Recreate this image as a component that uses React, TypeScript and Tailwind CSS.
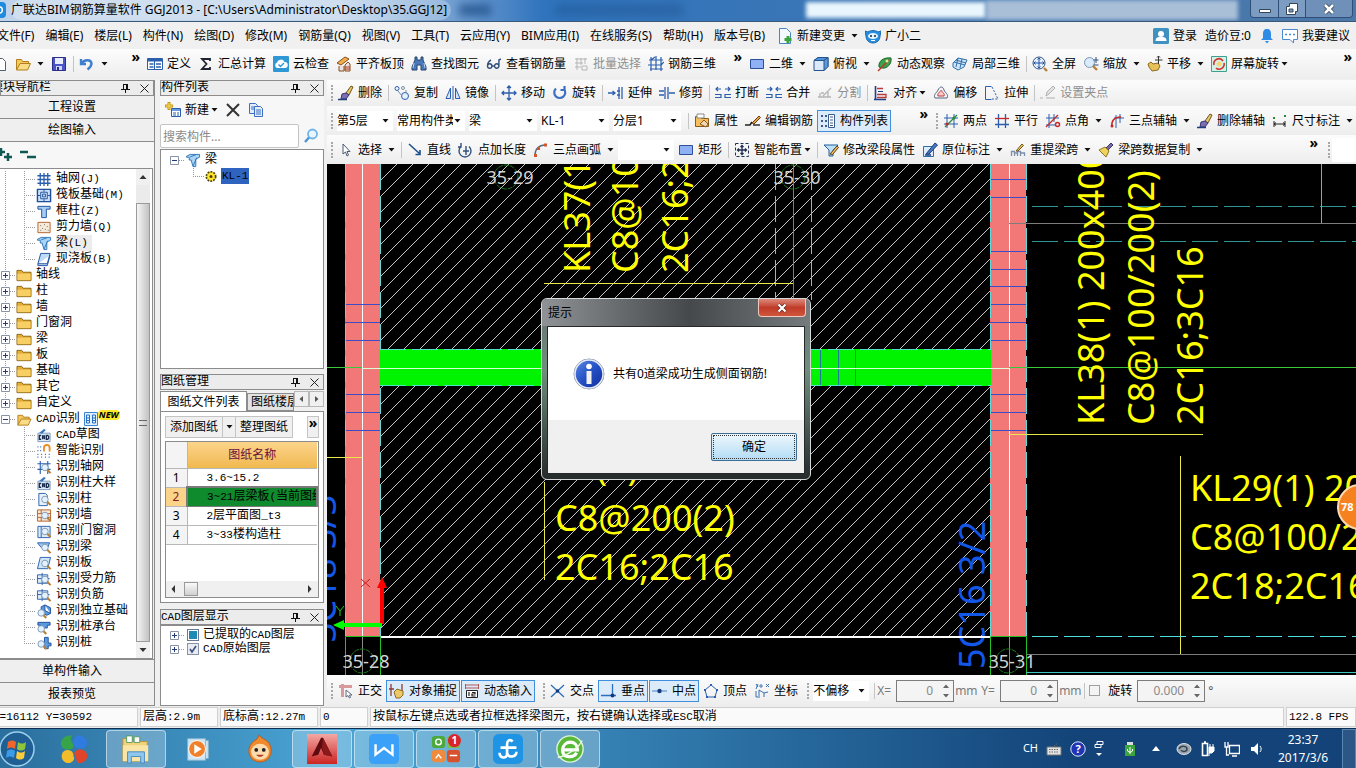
import type { ReactNode } from "react"
import clsx from "clsx"

const UI = "font-['Noto_Sans','Noto_Sans_CJK_SC',sans-serif]"
const MONO = "font-['Liberation_Mono','Noto_Sans_CJK_SC',monospace]"

// ---------------------------------------------------------------- icons

const B = "#2b5fae"
const LB = "#9cc7f0"

const magnifier = (
  <>
    <circle cx="9" cy="8" r="3.5" fill="#e4f2ff" stroke="#7d97b5" />
    <path d="M11.5 10.5l3.5 3.5" stroke="#b5803a" strokeWidth="2.2" />
  </>
)

const ICONS: Record<string, ReactNode> = {
  page: <path d="M3.5 2.5h7l3 3v9h-10z" fill="#fff" stroke="#55606e" />,
  open: (
    <>
      <path d="M1.5 14V3.5h5l1 2h6V8" fill="#f6c95c" stroke="#b17f1c" />
      <path d="M1.5 14L5 7.5h10.5L12.5 14z" fill="#fbdc86" stroke="#b17f1c" />
    </>
  ),
  save: (
    <>
      <path d="M1.5 1.5h13v13h-13z" fill="#4a55c8" stroke="#2a2f86" />
      <path d="M4 2h8v6H4z" fill="#e8ecfb" />
      <path d="M5 10h6v4H5z" fill="#cfd6f4" />
      <path d="M6 11h2v3H6z" fill="#2a2f86" />
    </>
  ),
  undo: <path d="M2 3v5h5M2.5 7.5C5 3.5 12 3 12.5 7.5c0 3-2 4.5-4 6" fill="none" stroke="#3f7fd0" strokeWidth="2.4" />,
  define: (
    <>
      <path d="M.5 2.5h15v11H.5z" fill="#fff" stroke={B} />
      <path d="M1 3h14v2.5H1z" fill={B} />
      <path d="M2.5 8h4M2.5 11h4M9 8h5M9 11h5" stroke={B} strokeWidth="1.5" />
      <path d="M7.5 5v8" stroke={B} />
    </>
  ),
  sigma: <path d="M12 5V3H4l4.5 5L4 13h8v-2" fill="none" stroke="#1d2430" strokeWidth="1.8" />,
  cloud: (
    <>
      <rect width="16" height="16" rx="1" fill="#2f98d4" />
      <path d="M4 12a3 3 0 010-5.5 4 4 0 017.5-.5A3 3 0 0112 12z" fill="#fff" />
      <path d="M5.5 8.5l2 2 3.5-3.5" fill="none" stroke="#2f98d4" strokeWidth="1.4" />
    </>
  ),
  slabTop: (
    <>
      <path d="M1 7l8-6 4 2-8 6z" fill="#f2b04a" stroke="#8a4b1c" />
      <path d="M3 10v5h5v-5M9 9v6h5V8l-2-2z" fill="#e8e2dc" stroke="#8a4b1c" />
      <path d="M9 11h5M9 13h5" stroke="#c03020" />
    </>
  ),
  binoculars: (
    <>
      <path d="M4 1h2v3h4V1h2v3l3 7v3h-5V9H6v5H1v-3l3-7z" fill="#4a78b8" stroke="#27466f" />
      <path d="M3 7l-1 5M13 7l1 5" stroke="#b5d2f2" />
    </>
  ),
  glasses: (
    <path d="M1.5 10a2.2 2.2 0 104.4 0 2.2 2.2 0 10-4.4 0C1.5 7 3 5 5 4M8.5 10a2.2 2.2 0 104.4 0 2.2 2.2 0 10-4.4 0M12.900 11V4l2-1M6 10h2.5" fill="none" stroke="#31507c" strokeWidth="1.4" />
  ),
  batch: <path d="M2 3h12M2 7h8M2 11h6M4 2v12M8 2v7M12 2v6M9 10h5v4H9z" fill="none" stroke="#b5b5b5" />,
  rebar3d: <path d="M1 4h14M0 9h14M2 13h13M3 1v14M8 0v14M13 1v14M3 4l4-3M13 9l3-3" fill="none" stroke={B} strokeWidth="1.2" />,
  rect: <path d="M1.5 3.5h13v9h-13z" fill="#8fb0f5" stroke="#2c4f9c" />,
  cube: (
    <>
      <path d="M1 4.5l4-3h10v9l-4 4H1z" fill="#dbe9fa" stroke="#27548f" />
      <path d="M1 4.5l4-3h10l-4 3z" fill="#4e94d8" stroke="#27548f" />
      <path d="M11 4.5v10l4-4v-9z" fill="#5f9ad8" stroke="#27548f" />
    </>
  ),
  orbit: (
    <>
      <path d="M2 11C1 5 7 1 14 2c1 6-4 11-9 10z" fill="#3ba14a" stroke="#176a2a" />
      <path d="M1 15L12 4" stroke="#c0392b" strokeWidth="1.5" />
      <circle cx="10" cy="5" r="1.5" fill="#d4f3a8" />
    </>
  ),
  local3d: <path d="M1 7l5-5 9 2-3 7-6 3-5-3zM6 2L4 11M10 3L8 12M2 6l11 3M4 4l10 3" fill="#cfe6fa" stroke="#2f6fa8" />,
  full: (
    <>
      <circle cx="7" cy="7" r="6" fill="#e9f3ff" stroke="#31507c" />
      <path d="M7 2v10M2 7h10M5.5 3.5L7 2l1.5 1.5M5.5 10.5L7 12l1.5-1.5M3.5 5.5L2 7l1.5 1.5M10.5 5.5L12 7l-1.5 1.5" fill="none" stroke="#1f4fa0" />
      <path d="M12 12l3 3" stroke="#b5803a" strokeWidth="2.4" />
    </>
  ),
  zoom: (
    <>
      <circle cx="6.5" cy="6.5" r="5" fill="#d9ebfc" stroke="#7d97b5" />
      <path d="M10 10l4 4" stroke="#b5803a" strokeWidth="2.4" />
      <path d="M13 1v6M10.5 4h5M10.5 9h5" stroke="#31507c" />
    </>
  ),
  hand: (
    <>
      <path d="M1 8l3-2 2 2 5-1 2 3-2 4-6 1-3-4z" fill="#e7c25a" stroke="#8c6a1c" />
      <path d="M11.5 0v8M8 4h7.5M11.5 0L10 1.5M11.5 0L13 1.5" stroke="#333" />
    </>
  ),
  screenRotate: (
    <>
      <path d="M.5.5h15v15H.5z" fill="#d6f0e8" stroke="#3fa08c" />
      <path d="M3 9a5 5 0 019-4M13 7a5 5 0 01-8 5" fill="none" stroke="#d2302c" strokeWidth="1.6" />
      <circle cx="8" cy="8" r="2.5" fill="#f6d873" />
    </>
  ),
  brush: (
    <>
      <path d="M8 8l5-7 2 1-4 8z" fill="#e8c86a" stroke="#6c551c" />
      <path d="M4 9l4-1 3 2-3 4H3z" fill="#7b6fb4" stroke="#3c3470" />
      <path d="M0 14.5h9" stroke="#1f3f7c" strokeWidth="1.5" />
    </>
  ),
  copyPts: (
    <>
      <circle cx="3" cy="3.5" r="2" fill="none" stroke={B} />
      <circle cx="9" cy="3" r="1.5" fill="none" stroke="#7a8da6" />
      <circle cx="11" cy="11" r="3.5" fill="#e6f0fb" stroke={B} />
      <path d="M4 6l4 5M12 5v3" stroke="#7a8da6" />
    </>
  ),
  mirror: <path d="M5.5 3v10.5H1zM10.5 3v10.5H15zM8 1v14" fill="#d6e6fa" stroke={B} />,
  move: <path d="M8 1v14M1 8h14M6 3l2-2 2 2M6 13l2 2 2-2M3 6L1 8l2 2M13 6l2 2-2 2" fill="none" stroke={B} strokeWidth="1.3" />,
  rotate: <path d="M4 3.5a5.5 5.5 0 108 .5M12.5 1v4H8.5" fill="none" stroke="#3a6fc4" strokeWidth="2.2" />,
  extend: <path d="M0 8h7M9 6h3M9 10h3M4.5 6L7 8l-2.5 2M14 2v12M11 2v12" fill="none" stroke={B} strokeWidth="1.3" />,
  trim: <path d="M0 6h5M0 10h5M6 2v12M9 2v12M10 8h6" fill="none" stroke={B} strokeWidth="1.3" />,
  breakIcon: <path d="M1 4h5M10 4h5M3 2L1 4l2 2M13 2l2 2-2 2M0 9.5h6v3H0M16 9.5h-6v3h6" fill="none" stroke={B} strokeWidth="1.2" />,
  merge: <path d="M1 4h5M10 4h5M4 2l2 2-2 2M12 2l-2 2 2 2M0 9.5h6v3H0M16 9.5h-6v3h6" fill="none" stroke={B} strokeWidth="1.2" />,
  split: <path d="M1 12h13M4 8h3M3 8v4M6 11L14 3M11 12V7" fill="none" stroke="#b5b5b5" strokeWidth="1.3" />,
  align: (
    <>
      <path d="M2.5 1v14M1 14.5h12" stroke="#1f3f8c" strokeWidth="1.6" />
      <path d="M4 3.5h6M4 9.5h9v3H4" fill="none" stroke="#b83a3a" strokeWidth="1.3" />
      <path d="M5 6.5h5" stroke="#1f3f8c" />
    </>
  ),
  offset: (
    <>
      <path d="M2 13c-2-4 2-5 3-8 2-4 5-4 6 0 1 3 5 4 3 8z" fill="#f2f4f8" stroke="#55657c" />
      <path d="M5 11c-1-2 1-3 2-4.500 1-1.500 1.500-1.500 2 0 1 1.500 3 2.500 2 4.500z" fill="#f9caca" stroke="#c03a3a" />
    </>
  ),
  stretch: (
    <>
      <path d="M7.5 1.5h-6v13h6" fill="none" stroke={B} />
      <path d="M8 2l6 12H8" fill="none" stroke={B} strokeDasharray="2 1.5" />
    </>
  ),
  grip: <path d="M0 13h3M6 13h9M6 11l1-4 6-6 2 2-6 6z" fill="#e2e2e2" stroke="#b0b0b0" />,
  props: (
    <>
      <path d="M1.5 13.5v-10h5l1 2h7v8z" fill="#f4bf5c" stroke="#8a5a1c" />
      <path d="M3 1h7v4H3z" fill="#fff" stroke="#8a8a8a" />
      <path d="M6 11l4-4 4 4-2 3z" fill="#f2d7b4" stroke="#8a5a1c" />
    </>
  ),
  editBar: (
    <>
      <path d="M0 12h5l2-3" fill="none" stroke="#222" strokeWidth="1.6" />
      <path d="M7 10l7-7 1.5 1.5L9 11z" fill="#e5a23c" stroke="#6b3d14" />
      <path d="M8 12h7" stroke="#222" strokeWidth="1.4" />
    </>
  ),
  list: (
    <>
      <path d="M8.5 1.5h6v13h-6z" fill="#fff" stroke="#3a5a8c" />
      <path d="M10 4h3M10 7h3M10 10h3M10 12.5h3" stroke="#3a5a8c" />
      <path d="M1 3h2M1 8h2M1 13h2M5 3h2M5 8h2M5 13h2" stroke="#3a5a8c" strokeWidth="2" />
    </>
  ),
  axis2: (
    <>
      <path d="M4 1v14M11 1v14M1 5h14M1 11h14" stroke={B} />
      <path d="M2 14L14 2" stroke="#2a8a3a" strokeWidth="1.3" />
      <circle cx="4" cy="11" r="1.6" fill="#c62828" />
      <circle cx="11" cy="5" r="1.6" fill="#2a8a3a" />
    </>
  ),
  axisPar: (
    <>
      <path d="M4.5 1v14M11.5 1v14M1 11.5h14" stroke={B} strokeWidth="1.3" />
      <path d="M1 5.5h14" stroke="#c62828" strokeWidth="1.3" />
    </>
  ),
  axisAngle: (
    <>
      <path d="M4 1v14M9 1v8M1 5h13M1 12h9" stroke={B} />
      <path d="M1 14L13 2" stroke="#c62828" strokeWidth="1.3" />
      <circle cx="12.5" cy="11.5" r="2" fill="none" stroke="#c62828" strokeWidth="1.5" />
    </>
  ),
  axisArc: (
    <>
      <path d="M7 2v13M11 1v9M5 5h10" stroke={B} />
      <path d="M3 14C2 8 5 4 12 4" fill="none" stroke="#c62828" strokeWidth="1.5" />
      <circle cx="3" cy="13" r="1.5" fill="#c62828" />
    </>
  ),
  dim: (
    <>
      <path d="M2 8v6M13 8v6M2 11h11M4 9.5L2 11l2 1.5M11 9.5l2 1.5-2 1.5" fill="none" stroke="#222" />
      <path d="M1 4h2v2H1zM12 2h2v2h-2z" fill="#2a8a3a" />
    </>
  ),
  cursor: <path d="M5 2v10l2.5-2L9 14l1.5-.8L9 9.5h3z" fill="#fff" stroke="#4a5a74" />,
  line: <path d="M2 2l11 10M13 8v4.5H8.5" fill="none" stroke="#1f4f8c" strokeWidth="1.6" />,
  pointLen: <path d="M3 4.5a6 6 0 108 0M3 1v4H0M8 4v9M5 9h6" fill="none" stroke="#31507c" strokeWidth="1.4" />,
  arc: (
    <>
      <path d="M2 13C2 7 6 3 12 3" fill="none" stroke="#5a6a80" strokeWidth="1.4" />
      <path d="M1 12h3v3H1zM4 5h3v3H4zM11 1.5h3v3h-3z" fill="#d2562c" />
    </>
  ),
  smart: (
    <>
      <path d="M1.5 1.5h13v13h-13z" fill="none" stroke="#1f2f4f" strokeDasharray="3 2" />
      <path d="M8 4v8M4 8h8M6.5 5L8 3.500 9.500 5M6.500 11L8 12.500 9.500 11M5 6.500L3.500 8 5 9.500M11 6.500L12.500 8 11 9.500" fill="none" stroke="#1f2f4f" strokeWidth="1.3" />
    </>
  ),
  editSeg: (
    <>
      <path d="M1 3h14l-5 5v6H6V8z" fill="#bfe0fa" stroke="#1f5f9c" />
      <path d="M7 12l7-8 1.5 1.5-6 7z" fill="#f2c45a" stroke="#5c3c14" />
    </>
  ),
  annotate: (
    <>
      <path d="M1.5 4.5h10v10h-10z" fill="#dcecfb" stroke="#2f6fa8" />
      <path d="M4 12L13 1l2.5 2L7 12z" fill="#4478c4" stroke="#1f3f7c" />
      <path d="M3 13h6" stroke="#1f3f7c" strokeWidth="1.5" />
    </>
  ),
  respan: (
    <>
      <path d="M1.5 14V9.5h3V14M7.5 14V9.5h3V14M4.5 11h3M10.5 11h4v3" fill="none" stroke="#7a8dac" strokeWidth="1.3" />
      <path d="M6 9l6-7 1.5 1.5L8 9z" fill="#f2c45a" stroke="#6c551c" />
    </>
  ),
  spanCopy: (
    <>
      <path d="M8 6l5-5 2 2-5 5z" fill="#7a6a9c" stroke="#3c3470" />
      <path d="M1 8l6-3 4 4-3 6z" fill="#f0d35a" stroke="#8c741c" />
    </>
  ),
  ortho: (
    <>
      <path d="M1 3.5h13M4.5 1v13" stroke="#d89a9a" strokeWidth="3" />
      <path d="M8 7v7l2-1.5 1.5 2.5 1-.5-1-2.5H14z" fill="#fff" stroke="#5a6a80" />
    </>
  ),
  snap: (
    <>
      <path d="M2 1v12M0 6h5M13 1v8" stroke="#8c3a3a" strokeWidth="1.3" />
      <path d="M5 9l3-3 6 2v4l-3 3H7z" fill="#edc868" stroke="#8c6a1c" />
    </>
  ),
  dynInput: (
    <>
      <path d="M1 2h14M1 5h14M1.5 1v5M14.5 1v5" stroke="#b05a5a" />
      <path d="M2.5 7.5h11v7h-11z" fill="#fff" stroke="#222" />
      <path d="M5 9v4M8 9.500h3v1.500H8V13h3.500" fill="none" stroke="#222" strokeWidth="1.2" />
    </>
  ),
  cross: (
    <>
      <path d="M1 2l13 12M14 2L1 14" stroke="#2b6fc0" strokeWidth="1.3" />
      <circle cx="7.5" cy="8" r="1.8" fill="#123a7c" />
    </>
  ),
  perp: (
    <>
      <path d="M11.5 1v12M0 12.5h15" stroke="#2b6fc0" strokeWidth="1.3" />
      <circle cx="11.5" cy="12.5" r="2" fill="#123a7c" />
    </>
  ),
  mid: (
    <>
      <path d="M0 8h15" stroke="#6a9ad4" strokeWidth="1.3" />
      <circle cx="7.5" cy="8" r="2.2" fill="#123a7c" />
    </>
  ),
  vertex: (
    <>
      <path d="M8 2l6 5-2 7H4L2 7z" fill="none" stroke={B} />
      <path d="M7 1h2v2H7zM13 6h2v2h-2zM1 6h2v2H1zM3 13h2v2H3zM11 13h2v2h-2z" fill={B} />
    </>
  ),
  coord: (
    <>
      <path d="M2 1l2 3M4 1L2 6M2 8v6h4M5 13V7l5 3 4-1M10 10v4M12 1l3 3M15 1l-3 3" fill="none" stroke="#3a6fae" />
      <circle cx="7" cy="3" r="1.2" fill="none" stroke="#3a6fae" />
    </>
  ),
  newDoc: (
    <>
      <path d="M2.5.5h7l4 4v11h-11z" fill="#f4f9ff" stroke="#4a86c4" />
      <path d="M11 8v7M7.5 11.5h7" stroke="#3aa43a" strokeWidth="3" />
    </>
  ),
  bot: (
    <>
      <path d="M0 3l3 1c3-2 7-2 10 0l3-1-1 5c0 4-3 7-7 7S1 12 1 8z" fill="#2a8fe0" stroke="#1668b0" />
      <ellipse cx="8" cy="8" rx="5" ry="3" fill="#e6f5ff" />
      <circle cx="6" cy="8" r="1" fill="#123" />
      <circle cx="10" cy="8" r="1" fill="#123" />
      <path d="M6 12.500h4" stroke="#fff" />
    </>
  ),
  user: (
    <>
      <rect width="16" height="16" rx="1.5" fill="#3f92c0" />
      <circle cx="8" cy="6" r="3" fill="#fff" />
      <path d="M2.500 13c0-4 3-4 5.500-4s5.500 0 5.500 4z" fill="#fff" />
    </>
  ),
  bell: <path d="M8 1c3 0 4 2 4 5v4l2 2H2l2-2V6c0-3 1-5 4-5zM6 13h4l-2 2.5z" fill="#2f8be6" />,
  bubble: (
    <>
      <path d="M.5 1.5h15v10h-4V15L8 11.5H.5z" fill="#fff" stroke="#4a8ad0" />
      <path d="M3 6.5h2M7 6.5h2M11 6.5h2" stroke="#4a8ad0" strokeWidth="1.5" />
    </>
  ),
  newComp: (
    <>
      <path d="M6.5 6.5h9v8h-9z" fill="#fff" stroke={B} />
      <path d="M7 7h8v2H7z" fill="#6c9ce0" />
      <path d="M8 11h3M12 11h2M8 13h3M12 13h2" stroke={B} />
      <path d="M4 0v8M0 4h8" stroke="#c89a1c" strokeWidth="3" />
      <path d="M4 1v6M1 4h6" stroke="#ffe15a" />
    </>
  ),
  del: <path d="M2 2l12 12M14 2L2 14" stroke="#333" strokeWidth="2" />,
  copy: (
    <>
      <path d="M1.5 1.5h6l2 2v8h-8z" fill="#e2eefc" stroke="#3a6fc4" />
      <path d="M6.5 4.5h6l2 2v8h-8z" fill="#e2eefc" stroke="#3a6fc4" />
      <path d="M8 8h5M8 10h5M8 12h5M3 5h3M3 7h3" stroke="#3a6fc4" />
    </>
  ),
  search: (
    <>
      <circle cx="9.5" cy="6" r="4.5" fill="#eaf6ff" stroke="#6fb4ea" strokeWidth="1.8" />
      <path d="M6 9.5L2 14" stroke="#4a94d4" strokeWidth="2.4" />
    </>
  ),
  grid: <path d="M1 4h14M1 8h14M1 12h14M4 1v14M8 1v14M12 1v14" stroke={B} strokeWidth="1.4" />,
  raft: (
    <>
      <path d="M1 1.5h14v13H1z" fill="#cfe2f8" stroke="#1f4f9c" strokeWidth="1.5" />
      <path d="M4.5 4.5h7v7h-7zM1 8h3M12 8h3M8 1v3M8 12v3M6.5 6.5h3v3h-3z" fill="none" stroke="#1f4f9c" />
    </>
  ),
  column: <path d="M1.5 2.5h13v3h-4v9h-5v-9h-4z" fill="#a6cdf4" stroke="#1f4f9c" />,
  wall: (
    <>
      <path d="M1.5 2.5h13v11h-13z" fill="#f8ead8" stroke="#b0622c" />
      <path d="M4 6h1M8 5h1M11 7h1M6 9h1M9 10h1M12 11h1M4 11h1" stroke="#6c6c6c" />
    </>
  ),
  beam: <path d="M1 3.5l4-2h10v3l-4 2v8H8l-2-7H4v-3H1zM5 4l6-2M8 14l4-9" fill="#a9d4f6" stroke="#2f74b4" />,
  slab: <path d="M4.5 1.5h10l-3 11h-10z M1.5 12.5v2h10l3-11" fill="#bddcf8" stroke="#1f4f9c" />,
  folder: (
    <>
      <path d="M.5 13.5v-11h5l1.5 2h8.5v9z" fill="#e2ad32" stroke="#8a6417" />
      <path d="M1 6h14v7H1z" fill="#f8cf62" />
    </>
  ),
  cad: (
    <>
      <path d="M1.5 5.5h13v9h-13z" fill="#dcecfb" stroke="#7d97b5" />
      <path d="M5 8H3v4h2M6.5 12V8.5h2V12M6.5 10.5h2M10.5 8v4H12l1-1V9l-1-1z" fill="none" stroke="#1d2d4d" strokeWidth="1.4" />
      <path d="M3 5l5-4 2 1-4 4z" fill="#3a78c4" />
    </>
  ),
  magnet: (
    <>
      <path d="M1 3h1M4 3h1M1 7h1M4 7h1M1 11h1M5 11h1M9 11h1M13 11h1M1 14h1M5 14h1M9 14h1M13 14h1" stroke={B} strokeWidth="1.3" />
      <path d="M8 8V4a3 3 0 016 0v4" fill="none" stroke="#e8912c" strokeWidth="2" />
    </>
  ),
  idGrid: (
    <>
      <path d="M1 4h14M1 10h14M4 1v14M12 1v14" stroke={B} strokeWidth="1.2" />
      {magnifier}
    </>
  ),
  idCol: (
    <>
      <path d="M2.5 1.5h7l2 2v11h-9z" fill="#e6f1fc" stroke={B} />
      {magnifier}
    </>
  ),
  idWall: (
    <>
      <path d="M1 2h14v12H1zM1 6h14M1 10h14M5 2v4M10 6v4M5 10v4" fill="#fbe6d4" stroke="#b0622c" />
      {magnifier}
    </>
  ),
  idDoor: (
    <>
      <path d="M1.5 2.5h13v12h-13zM5 3v11" fill="#dcecfb" stroke={B} />
      {magnifier}
    </>
  ),
  idBeam: (
    <>
      <path d="M1 3h13l-2 5H5z" fill={LB} stroke={B} />
      {magnifier}
    </>
  ),
  idSlab: (
    <>
      <path d="M4 1.5h11l-3 12H1z" fill="#cfe5fa" stroke={B} />
      {magnifier}
    </>
  ),
  idRebar: (
    <>
      <path d="M1 3h11v9H1zM6 1v13M1 7h13" fill="#dcecfb" stroke={B} />
      {magnifier}
    </>
  ),
  idFound: (
    <>
      <path d="M5 3l4-2 6 3v6l-4 2-6-3zM9 1v6l6 3" fill="#5a9be0" stroke="#1f4f9c" />
      <circle cx="5" cy="9.5" r="3.5" fill="#e4f2ff" stroke="#7d97b5" />
      <path d="M7.5 12l3 3" stroke="#b5803a" strokeWidth="2.2" />
    </>
  ),
  idCap: (
    <>
      <path d="M1.500 2.500h13v3h-3v3h-7v-3h-3z" fill="#5a9be0" stroke="#1f4f9c" />
      <circle cx="5" cy="9.5" r="3.5" fill="#e4f2ff" stroke="#7d97b5" />
      <path d="M7.5 12l3 3" stroke="#b5803a" strokeWidth="2.2" />
    </>
  ),
  idPile: (
    <>
      <path d="M8.500 1.500h4v6h3v3h-3v3h-4z" fill="#5a9be0" stroke="#1f4f9c" />
      <circle cx="5" cy="8.5" r="3.5" fill="#e4f2ff" stroke="#7d97b5" />
      <path d="M7.5 11l3 3" stroke="#b5803a" strokeWidth="2.2" />
    </>
  ),
  gear: (
    <>
      <circle cx="8" cy="8" r="5" fill="#ffe62a" stroke="#4a4310" strokeWidth="1.8" strokeDasharray="2 1.2" />
      <circle cx="8" cy="8" r="1.6" fill="#4a4310" />
    </>
  ),
}

function Icon({ name, className = "size-4" }: { name: string; className?: string }) {
  return (
    <svg viewBox="0 0 16 16" aria-hidden="true" className={clsx("shrink-0", className)}>
      {ICONS[name]}
    </svg>
  )
}

function Caret({ className }: { className?: string }) {
  return (
    <svg viewBox="0 0 7 4" aria-hidden="true" className={clsx("h-1 w-[7px] shrink-0", className)}>
      <path d="M.5 0h6l-3 3.500z" fill="#111" />
    </svg>
  )
}

// Song-style labels: narrow monospaced Latin between full-width characters
function Song({ children }: { children: string }) {
  return (
    <span className={clsx(MONO, "whitespace-pre text-xs leading-4")}>
      {children.split(/([\x20-\x7e]+)/).map((part, i) =>
        i % 2 ? (
          <span key={i} className="text-[11px]">
            {part}
          </span>
        ) : (
          part
        ),
      )}
    </span>
  )
}

// ---------------------------------------------------------------- toolbar parts

type ItemProps = {
  icon?: string
  label?: string
  caret?: "near" | "far"
  active?: boolean
  disabled?: boolean
}

function Item({ icon, label, caret, active, disabled }: ItemProps) {
  return (
    <button
      type="button"
      disabled={disabled}
      aria-label={label ?? icon}
      className={clsx(
        "flex h-[22px] shrink-0 items-center gap-1 border px-0.5 text-xs leading-4 whitespace-nowrap",
        active ? "border-[#3f8fdc] bg-[#dcebf9]" : "border-transparent",
        disabled ? "text-[#8f8f8f]" : "text-black",
      )}
    >
      {icon ? <Icon name={icon} /> : null}
      {label ? <span>{label}</span> : null}
      {caret ? <Caret className={caret === "far" ? "ml-0.5" : "-ml-0.5"} /> : null}
    </button>
  )
}

function Sep() {
  return <span className="mr-px ml-0.5 h-4 w-px shrink-0 bg-[#c4c4c4]" />
}

function Handle() {
  return <span className="mr-px h-4 w-0.5 shrink-0 border-l-2 border-dotted border-[#a8a8a8]" />
}

function More() {
  return <span className="ml-auto h-5 shrink-0 self-start px-1 text-sm leading-4 font-bold">»</span>
}

function Picker({ label, value, className }: { label: string; value: string; className: string }) {
  return (
    <span className={clsx("relative flex shrink-0 items-center", className)}>
      <select aria-label={label} className="h-5 w-full appearance-none overflow-hidden bg-white pr-3 text-xs leading-5 outline-none">
        <option>{value}</option>
      </select>
      <Caret className="pointer-events-none absolute right-1" />
    </span>
  )
}

function Bar({ children, className }: { children: ReactNode; className?: string }) {
  return (
    <div
      className={clsx(
        "flex shrink-0 items-center gap-px overflow-hidden bg-linear-to-b from-[#fcfcfc] to-[#ededed] pl-1",
        className,
      )}
    >
      {children}
    </div>
  )
}

// ---------------------------------------------------------------- window chrome

function TitleBar() {
  return (
    <header className="flex h-[22px] shrink-0 items-start overflow-hidden border-b border-[#3a5878] bg-linear-to-r from-[#bfd4ea] from-25% via-[#2f74bd] via-40% to-[#4c78a8]">
      <span className="mt-0.5 -ml-2.5 flex size-4 shrink-0 items-center justify-end rounded-sm bg-[#1f8be0]">
        <svg viewBox="0 0 6 8" className="mr-0.5 h-2 w-1.5">
          <path d="M0 1h2c3 0 3 6 0 6H0" fill="none" stroke="#fff" strokeWidth="1.500" />
        </svg>
      </span>
      <h1 className="ml-[5px] shrink-0 rounded-full bg-white/25 pr-1 text-xs leading-[20px] whitespace-nowrap">
        广联达BIM钢筋算量软件 GGJ2013 - [C:\Users\Administrator\Desktop\35.GGJ12]
      </h1>
      <span className="mt-1 ml-2 h-3 w-8 bg-[#123f78] opacity-60 blur-xs" />
      <span className="mt-1 ml-16 h-3 w-32 bg-[#235a9a] opacity-60 blur-xs" />
      <span className="mt-0.5 ml-auto h-4 w-[180px] bg-[#eaf6fd] blur-[2px]" />
      <span className="h-5 w-[252px] bg-[#a9bfd8] blur-[2px]" />
      <div className="mr-[3px] ml-3 flex h-[18px] shrink-0 overflow-hidden rounded-b-sm border border-t-0 border-[#2f4f78] text-white">
        <button type="button" aria-label="最小化" className="flex w-7 items-center justify-center border-r border-[#2f4f78] bg-[#7c9cc2]">
          <svg viewBox="0 0 12 12" className="size-3">
            <path d="M.5 6.500h11v3H.5z" fill="#fff" stroke="#34465c" />
          </svg>
        </button>
        <button type="button" aria-label="还原" className="flex w-[27px] items-center justify-center border-r border-[#2f4f78] bg-[#7c9cc2]">
          <svg viewBox="0 0 12 12" className="size-3">
            <path d="M3.5.5h8v8h-2v3h-9v-8h3z" fill="#fff" stroke="#34465c" />
            <path d="M3 6h4v3H3z" fill="#7c9cc2" stroke="#34465c" />
          </svg>
        </button>
        <button type="button" aria-label="关闭" className="flex w-[46px] items-center justify-center bg-[#6f90b8]">
          <svg viewBox="0 0 12 12" className="size-3">
            <path d="M2 2l8 8M10 2l-8 8" stroke="#34465c" strokeWidth="4" />
            <path d="M2 2l8 8M10 2l-8 8" stroke="#fff" strokeWidth="2.5" />
          </svg>
        </button>
      </div>
    </header>
  )
}

const MENUS = [
  "文件(F)", "编辑(E)", "楼层(L)", "构件(N)", "绘图(D)", "修改(M)", "钢筋量(Q)", "视图(V)",
  "工具(T)", "云应用(Y)", "BIM应用(I)", "在线服务(S)", "帮助(H)", "版本号(B)",
]

function MenuBar() {
  return (
    <nav className="flex h-[27px] shrink-0 items-center overflow-hidden bg-[#f0f0f0] text-xs">
      <div className="-ml-[3px] flex shrink-0 gap-[11px]">
        {MENUS.map((m) => (
          <button key={m} type="button" className="leading-4 whitespace-nowrap">
            {m}
          </button>
        ))}
      </div>
      <div className="ml-[9px] flex shrink-0 gap-px">
        <Item icon="newDoc" label="新建变更" caret="far" />
        <Item icon="bot" label="广小二" />
      </div>
      <div className="ml-auto flex shrink-0 items-center gap-px pr-[3px]">
        <Item icon="user" label="登录" />
        <span className="mx-1 leading-4">造价豆:0</span>
        <Item icon="bell" />
        <Item icon="bubble" label="我要建议" />
      </div>
    </nav>
  )
}

function MainToolbar() {
  return (
    <div className="flex h-[30px] shrink-0 items-center overflow-hidden bg-linear-to-b from-[#fcfcfc] to-[#ededed]">
      <div className="-ml-[11px] flex h-full w-[155px] shrink-0 items-center gap-px">
        <Item icon="page" />
        <Item icon="open" caret="far" />
        <Item icon="save" />
        <Sep />
        <Item icon="undo" caret="far" />
        <More />
      </div>
      <div className="flex h-full w-[602px] shrink-0 items-center gap-px">
        <Item icon="define" label="定义" />
        <Item icon="sigma" label="汇总计算" />
        <Item icon="cloud" label="云检查" />
        <Item icon="slabTop" label="平齐板顶" />
        <Item icon="binoculars" label="查找图元" />
        <Item icon="glasses" label="查看钢筋量" />
        <Item icon="batch" label="批量选择" disabled />
        <Item icon="rebar3d" label="钢筋三维" />
        <More />
      </div>
      <div className="flex h-full min-w-0 flex-1 items-center gap-px">
        <Item icon="rect" label="二维" caret="far" />
        <Item icon="cube" label="俯视" caret="far" />
        <Item icon="orbit" label="动态观察" />
        <Item icon="local3d" label="局部三维" />
        <Sep />
        <Item icon="full" label="全屏" />
        <Item icon="zoom" label="缩放" caret="far" />
        <Item icon="hand" label="平移" caret="far" />
        <Item icon="screenRotate" label="屏幕旋转" caret="near" />
        <More />
      </div>
    </div>
  )
}

function EditToolbars() {
  return (
    <>
      <Bar className="h-[26px]">
        <Handle />
        <Item icon="brush" label="删除" />
        <Sep />
        <Item icon="copyPts" label="复制" />
        <Item icon="mirror" label="镜像" />
        <Sep />
        <Item icon="move" label="移动" />
        <Item icon="rotate" label="旋转" />
        <Sep />
        <Item icon="extend" label="延伸" />
        <Item icon="trim" label="修剪" />
        <Sep />
        <Item icon="breakIcon" label="打断" />
        <Item icon="merge" label="合并" />
        <Item icon="split" label="分割" disabled />
        <Sep />
        <Item icon="align" label="对齐" caret="near" />
        <Item icon="offset" label="偏移" />
        <Item icon="stretch" label="拉伸" />
        <Sep />
        <Item icon="grip" label="设置夹点" disabled />
      </Bar>
      <Bar className="h-[29px]">
        <Handle />
        <div className="mr-1 ml-0.5 flex gap-1">
          <Picker label="楼层" value="第5层" className="w-14" />
          <Picker label="构件范围" value="常用构件类型" className="w-[68px]" />
          <Picker label="构件类型" value="梁" className="w-[68px]" />
          <Picker label="构件" value="KL-1" className="w-[68px]" />
          <Picker label="分层" value="分层1" className="w-[68px]" />
        </div>
        <Sep />
        <Item icon="props" label="属性" />
        <Item icon="editBar" label="编辑钢筋" />
        <Item icon="list" label="构件列表" active />
        <div className="flex h-full w-10 shrink-0">
          <More />
        </div>
        <span className="w-0.5" />
        <Handle />
        <Item icon="axis2" label="两点" />
        <Item icon="axisPar" label="平行" />
        <Item icon="axisAngle" label="点角" caret="far" />
        <Item icon="axisArc" label="三点辅轴" caret="far" />
        <Item icon="brush" label="删除辅轴" />
        <Item icon="dim" label="尺寸标注" caret="far" />
      </Bar>
      <Bar className="h-[29px]">
        <Handle />
        <Item icon="cursor" label="选择" caret="far" />
        <Sep />
        <Item icon="line" label="直线" />
        <Item icon="pointLen" label="点加长度" />
        <Item icon="arc" label="三点画弧" caret="far" />
        <Picker label="画法" value="" className="w-14" />
        <Item icon="rect" label="矩形" />
        <Sep />
        <Item icon="smart" label="智能布置" caret="near" />
        <Sep />
        <Item icon="editSeg" label="修改梁段属性" />
        <Item icon="annotate" label="原位标注" caret="far" />
        <Item icon="respan" label="重提梁跨" caret="far" />
        <Item icon="spanCopy" label="梁跨数据复制" caret="far" />
        <More />
        <span className="w-1" />
        <Handle />
        <span className="h-6 w-6 shrink-0 bg-white" />
      </Bar>
    </>
  )
}

// ---------------------------------------------------------------- docked panels

function PanelTitle({ title, clipped }: { title: string; clipped?: boolean }) {
  return (
    <div className="flex h-4 shrink-0 items-center overflow-hidden border border-[#8c8c8c] bg-[#ececec]">
      <h2 className={clsx("flex min-w-0 flex-1 whitespace-nowrap", clipped && "-ml-2.5")}>
        <Song>{title}</Song>
      </h2>
      <button type="button" aria-label="固定" className="mr-2.5">
        <svg viewBox="0 0 9 9" className="size-[9px]">
          <path d="M2.5 0v5M6.5 0v5M2 .5h5M0 5.5h9M4.5 5v4M5.5 1v4" stroke="#111" />
        </svg>
      </button>
      <button type="button" aria-label="关闭" className="mr-1">
        <svg viewBox="0 0 9 9" className="size-[9px]">
          <path d="M.5.5l8 8M8.5.5l-8 8" stroke="#222" />
        </svg>
      </button>
    </div>
  )
}

function WideButton({ label }: { label: string }) {
  return (
    <button type="button" className="block h-[23px] w-full shrink-0 border-b border-[#8c8c8c] bg-[#efefef] pr-2.5 text-xs leading-5">
      {label}
    </button>
  )
}

function Expander({ open, rail }: { open?: boolean; rail?: boolean }) {
  return (
    <svg viewBox="0 0 16 16" aria-hidden="true" className="size-4 shrink-0">
      {rail ? <path d="M5.5 0v16" stroke="#9a9a9a" strokeDasharray="1 1" /> : null}
      <path d="M10 8.5h6" stroke="#9a9a9a" strokeDasharray="1 1" />
      <path d="M1.5 4.5h8v8h-8z" fill="#fff" stroke="#8a93a5" />
      <path d="M3 8.5h5" stroke="#223a7a" />
      {open ? null : <path d="M5.5 6v5" stroke="#223a7a" />}
    </svg>
  )
}

function Branch({ rail, last }: { rail?: boolean; last?: boolean }) {
  return (
    <svg viewBox="0 0 36 16" aria-hidden="true" className="h-4 w-9 shrink-0">
      {rail ? <path d="M5.5 0v16" stroke="#9a9a9a" strokeDasharray="1 1" /> : null}
      <path d={last ? "M24.5 0v8" : "M24.5 0v16"} stroke="#9a9a9a" strokeDasharray="1 1" />
      <path d="M24 8.5h11" stroke="#9a9a9a" strokeDasharray="1 1" />
    </svg>
  )
}

const COMMON = [
  ["grid", "轴网(J)"],
  ["raft", "筏板基础(M)"],
  ["column", "框柱(Z)"],
  ["wall", "剪力墙(Q)"],
  ["beam", "梁(L)"],
  ["slab", "现浇板(B)"],
]

const FOLDERS = ["轴线", "柱", "墙", "门窗洞", "梁", "板", "基础", "其它", "自定义"]

const CAD_ITEMS = [
  ["cad", "CAD草图"],
  ["magnet", "智能识别"],
  ["idGrid", "识别轴网"],
  ["cad", "识别柱大样"],
  ["idCol", "识别柱"],
  ["idWall", "识别墙"],
  ["idDoor", "识别门窗洞"],
  ["idBeam", "识别梁"],
  ["idSlab", "识别板"],
  ["idRebar", "识别受力筋"],
  ["idRebar", "识别负筋"],
  ["idFound", "识别独立基础"],
  ["idCap", "识别桩承台"],
  ["idPile", "识别桩"],
]

function Leaf({ icon, label, rail, last }: { icon: string; label: string; rail?: boolean; last?: boolean }) {
  return (
    <li className="flex h-4 items-center">
      <Branch rail={rail} last={last} />
      <Icon name={icon} className="mr-1 h-[15px] w-4" />
      <span className={clsx("flex", label === "梁(L)" && "bg-[#ececec] pr-1")}>
        <Song>{label}</Song>
      </span>
    </li>
  )
}

function ScrollArrow({ up }: { up?: boolean }) {
  return (
    <svg viewBox="0 0 14 16" className="h-4 w-3.5 shrink-0 bg-[#f0f0f0]">
      <path d={up ? "M3.5 10L7 6l3.5 4z" : "M3.5 6L7 10l3.5-4z"} fill="#333" />
    </svg>
  )
}

function NavPanel() {
  return (
    <aside className="flex w-[155px] shrink-0 flex-col border-r border-[#8c8c8c] bg-[#f0f0f0]">
      <PanelTitle title="模块导航栏" clipped />
      <WideButton label="工程设置" />
      <WideButton label="绘图输入" />
      <div className="flex h-[26px] shrink-0 items-center gap-2.5 bg-[#f7f7f7]">
        <button type="button" aria-label="全部展开" className="-ml-1">
          <svg viewBox="0 0 16 16" className="size-4">
            <path d="M5 1v8M1 5h8M12 6v8M8 10h8" stroke="#0f5a50" strokeWidth="2.5" />
          </svg>
        </button>
        <button type="button" aria-label="全部折叠" className="-ml-0.5">
          <svg viewBox="0 0 16 16" className="size-4">
            <path d="M0 5h8M7 10h9" stroke="#0f5a50" strokeWidth="2.5" />
          </svg>
        </button>
      </div>
      <div className="mr-px flex flex-1 border border-l-0 border-[#8c8c8c] bg-white">
        <ul className="min-w-0 flex-1 overflow-hidden pt-0.5">
          {COMMON.map(([icon, label], i) => (
            <Leaf key={label} icon={icon} label={label} rail last={i === COMMON.length - 1} />
          ))}
          {FOLDERS.map((label) => (
            <li key={label} className="flex h-4 items-center">
              <Expander rail />
              <Icon name="folder" className="mr-1 h-[15px] w-4" />
              <Song>{label}</Song>
            </li>
          ))}
          <li className="flex h-4 items-center">
            <Expander open />
            <Icon name="open" className="mr-1 h-[15px] w-4" />
            <Song>CAD识别</Song>
            <svg viewBox="0 0 14 14" className="ml-1 size-3.5 shrink-0">
              <path d="M.5.5h13v13H.5z" fill="#dff0ff" stroke="#3a86d0" />
              <path d="M2.5 3h3v8h-3zM8.5 3h3v8h-3zM2.5 6h3M8.5 6h3M2.5 8.5h3M8.5 8.5h3" fill="none" stroke="#2b6fc0" />
            </svg>
            <span className="mb-2 rounded-sm bg-[#ffe92e] px-px text-[9px] leading-[10px] font-bold text-black italic">NEW</span>
          </li>
          {CAD_ITEMS.map(([icon, label], i) => (
            <Leaf key={label} icon={icon} label={label} last={i === CAD_ITEMS.length - 1} />
          ))}
        </ul>
        <div className="mr-0.5 flex w-3.5 shrink-0 flex-col bg-[#ebebeb]">
          <ScrollArrow up />
          <div className="mt-[18px] flex flex-1 flex-col items-center justify-center border border-[#9a9a9a] bg-linear-to-r from-[#f6f6f6] to-[#c2c2c2]">
            <span className="h-1.5 w-2 border-y border-[#666]" />
          </div>
          <ScrollArrow />
        </div>
      </div>
      <div className="border-t border-[#8c8c8c]">
        <WideButton label="单构件输入" />
        <WideButton label="报表预览" />
      </div>
    </aside>
  )
}

const DRAWINGS = ["3.6~15.2", "3~21层梁板(当前图纸)", "2层平面图_t3", "3~33楼构造柱"]

function DrawingPanel() {
  return (
    <section className="mt-[5px] flex h-[229px] shrink-0 flex-col">
      <PanelTitle title="图纸管理" />
      <div className="mt-px flex h-5 shrink-0 items-end overflow-hidden text-xs">
        <button type="button" className="h-5 w-[87px] shrink-0 border border-b-0 border-[#8c8c8c] bg-white leading-4">
          图纸文件列表
        </button>
        <button type="button" className="h-[18px] min-w-0 flex-1 overflow-hidden border border-[#8c8c8c] bg-[#e2e2e2] pl-[3px] text-left leading-4 whitespace-nowrap">
          图纸楼层对照表
        </button>
        <div className="flex self-start">
          {["M8 4L4.5 7 8 10z", "M5 4l3.5 3L5 10z"].map((d, i) => (
            <button key={d} type="button" aria-label={i ? "下一页" : "上一页"} className="border border-[#b8b8b8] bg-[#f0f0f0]">
              <svg viewBox="0 0 13 14" className="h-3.5 w-[13px]">
                <path d={d} fill="#555" />
              </svg>
            </button>
          ))}
        </div>
      </div>
      <div className="flex min-h-0 flex-1 flex-col border border-[#8c8c8c] bg-white p-1">
        <div className="flex h-[22px] shrink-0 overflow-hidden bg-[#f0f0f0] text-xs">
          <button type="button" className="w-[58px] shrink-0 border border-[#c4c4c4]">添加图纸</button>
          <button type="button" aria-label="添加图纸选项" className="flex w-3 shrink-0 items-center justify-center border-y border-[#c4c4c4]">
            <Caret />
          </button>
          <button type="button" className="w-[58px] shrink-0 border border-[#c4c4c4]">整理图纸</button>
          <span className="flex-1 bg-white" />
          <span className="w-3 border border-[#c4c4c4] text-center text-sm leading-3 font-bold">»</span>
        </div>
        <div className="mt-[3px] flex min-h-0 flex-1 flex-col overflow-hidden border border-[#8c8c8c]">
          <table className="w-full table-fixed border-collapse text-left text-xs">
            <thead>
              <tr className="h-[26px]">
                <th aria-label="序号" className="w-[21px] border-r border-b border-[#b8b8b8] bg-[#f4f4f4]" />
                <th className="border-b border-[#b8b8b8] bg-linear-to-b from-[#fbd48a] to-[#f0b84e] text-center font-normal text-[#6b0f3c]">
                  图纸名称
                </th>
              </tr>
            </thead>
            <tbody>
              {DRAWINGS.map((name, i) => (
                <tr key={name} className="h-[19px]">
                  <td className={clsx("border-r border-b border-[#b8b8b8] text-center leading-4", i === 1 ? "bg-[#fbd48a] text-[#8a2020]" : "bg-[#f4f4f4]")}>
                    {i + 1}
                  </td>
                  <td
                    className={clsx(
                      "overflow-hidden border-b pl-[19px] leading-4 whitespace-nowrap",
                      i === 1 ? "border-2 border-[#7a7a7a] bg-[#0f8a2c]" : "border-[#b8b8b8]",
                    )}
                  >
                    <Song>{name}</Song>
                  </td>
                </tr>
              ))}
            </tbody>
          </table>
          <div className="mt-auto flex h-4 shrink-0 items-center bg-[#f0f0f0]">
            <svg viewBox="0 0 18 16" className="h-4 w-[18px] shrink-0">
              <path d="M9 4L5.5 8 9 12z" fill="#333" />
            </svg>
            <span className="h-3.5 w-3.5 border border-[#9a9a9a] bg-linear-to-b from-[#fafafa] to-[#d0d0d0]" />
            <svg viewBox="0 0 18 16" className="ml-auto h-4 w-[18px] shrink-0">
              <path d="M8 4l3.5 4L8 12z" fill="#333" />
            </svg>
          </div>
        </div>
      </div>
    </section>
  )
}

function SidePanel() {
  return (
    <aside className="ml-[5px] flex w-[164px] shrink-0 flex-col">
      <PanelTitle title="构件列表" />
      <div className="flex h-[27px] shrink-0 items-center gap-px bg-[#f7f7f7] pl-0.5">
        <Item icon="newComp" label="新建" caret="near" />
        <Item icon="del" />
        <Item icon="copy" />
      </div>
      <div className="flex h-[26px] shrink-0 items-center gap-1 bg-[#f7f7f7]">
        <input
          type="text"
          aria-label="搜索构件"
          placeholder="搜索构件..."
          className="h-6 w-[139px] rounded-xs border border-[#c4c4c4] bg-white px-0.5 text-xs outline-none placeholder:text-[#8a8a8a]"
        />
        <button type="button" aria-label="搜索">
          <Icon name="search" />
        </button>
      </div>
      <ul className="h-[220px] shrink-0 border border-[#8c8c8c] bg-white pt-0.5 pl-2">
        <li className="flex h-4 items-center">
          <Expander open />
          <Icon name="beam" className="mr-1 h-[15px] w-4" />
          <Song>梁</Song>
        </li>
        <li className="flex h-4 items-center">
          <Branch last />
          <Icon name="gear" className="-ml-0.5 h-[15px] w-4" />
          <span className="ml-0.5 flex bg-[#2f63c0] px-px">
            <Song>KL-1</Song>
          </span>
        </li>
      </ul>
      <DrawingPanel />
      <section className="mt-[6px] flex flex-1 flex-col">
        <PanelTitle title="CAD图层显示" />
        <ul className="flex-1 border border-[#8c8c8c] bg-white pt-0.5 pl-2">
          <li className="flex h-3.5 items-center">
            <Expander />
            <label className="ml-0.5 flex items-center gap-1">
              <span className="flex size-3 border border-[#6a7a94] bg-white p-px">
                <input type="checkbox" className="size-full appearance-none bg-[#1f8ab4]" />
              </span>
              <Song>已提取的CAD图层</Song>
            </label>
          </li>
          <li className="flex h-3.5 items-center">
            <Expander />
            <label className="ml-0.5 flex items-center gap-1">
              <span className="relative flex size-3 items-center justify-center">
                <input type="checkbox" defaultChecked className="size-3 appearance-none border border-[#8a93a5] bg-[#e8ebf2]" />
                <svg viewBox="0 0 10 10" className="pointer-events-none absolute size-2.5">
                  <path d="M2 5l2 3 4-6" fill="none" stroke="#3a4f7c" strokeWidth="1.600" />
                </svg>
              </span>
              <Song>CAD原始图层</Song>
            </label>
          </li>
        </ul>
      </section>
    </aside>
  )
}

// ---------------------------------------------------------------- drawing

const CAD_FONT = "Noto Sans, sans-serif"
const LEFT_STIRRUPS = [304, 322, 340, 394, 412, 430]
const RIGHT_STIRRUPS = [179, 197, 251, 269, 286, 304, 322, 340, 394, 412, 430]

function VText({ x, y, fill = "#ffff00", children }: { x: number; y: number; fill?: string; children: string }) {
  return (
    <text transform={`translate(${x} ${y}) rotate(-90)`} fill={fill} fontSize="36">
      {children}
    </text>
  )
}

function AxisMark({ x, y, children }: { x: number; y: number; children: string }) {
  return (
    <>
      <circle cx={x} cy={y} r="12" fill="none" stroke="#1c7a1c" strokeDasharray="5 1" />
      <text x={x + 4} y={y + 7} textAnchor="middle" fill="#d4d4d4" fontSize="18">
        {children}
      </text>
    </>
  )
}

function Drawing() {
  return (
    <svg className="absolute inset-0 size-full bg-black" fontFamily={CAD_FONT}>
      <defs>
        <pattern id="hatch" width="16" height="16" patternUnits="userSpaceOnUse" patternTransform="translate(1 0)">
          <path d="M-1 17L17 -1" stroke="#c4c4c4" shapeRendering="crispEdges" />
        </pattern>
      </defs>
      {/* model space origin sits above and left of the viewport */}
      <g transform="translate(-327 -164)">
        <path d="M380 164h611v472H380z" fill="url(#hatch)" />
        <path d="M775.5 164v136M811.5 164v136" stroke="#4fd6d6" strokeDasharray="26 6" />
        <path d="M793.5 164v136" stroke="#7c7c7c" />

        <text x="555" y="480" fill="#ffff00" fontSize="36">KL(1)</text>
        <text x="555" y="531" fill="#ffff00" fontSize="36">C8@200(2)</text>
        <text x="555" y="580" fill="#ffff00" fontSize="36">2C16;2C16</text>
        <VText x={590} y={273}>KL37(1)</VText>
        <VText x={638} y={273}>C8@100</VText>
        <VText x={688} y={273}>2C16;2C16</VText>
        <VText x={985} y={669} fill="#1257e6">5C16 3/2</VText>
        <VText x={336} y={643} fill="#1257e6">5C18 3/3</VText>

        <path d="M345 164h35v472h-35zM990 164h36v472h-36z" fill="#f27878" />
        <path d="M362.5 164v472M1009.5 164v472" stroke="#fff" />
        {LEFT_STIRRUPS.map((y) => (
          <path key={y} d={`M345 ${y}.5h35`} stroke="#3c4cc4" />
        ))}
        {RIGHT_STIRRUPS.map((y) => (
          <path key={y} d={`M990 ${y}.5h36`} stroke="#3c4cc4" />
        ))}
        <path d="M345.5 164v472M380.5 164v472M990.5 164v472M1026.5 164v472" stroke="#5fdada" strokeDasharray="26 6" />

        <path d="M380 349h611v37H380z" fill="#00f400" />
        <path d="M380 349.5h611M380 385.5h611" stroke="#4fe0c8" strokeDasharray="26 6" />
        <path d="M820.5 350v35M838.5 350v35M855.5 350v35" stroke="#1f7a9c" />
        <path d="M362 368.5h647" stroke="#d8ffd8" />
        <path d="M327 367.5h35M1009 367.5h347" stroke="#3cc83c" />

        <path d="M380 637h611" stroke="#fff" strokeWidth="2" />
        <path d="M345.5 675v-38.5h35V675M990.5 675v-38.5h36V675" fill="none" stroke="#22c022" />
        <path d="M362.5 637v38M1009.5 637v38" stroke="#8a8a8a" />

        <path d="M544.5 482v98M544 283.5h249M1009 434.5h194M1180.5 456v198M327 457.5h35" fill="none" stroke="#e8e84a" />
        <path d="M1026 206.5h330M1026 241.5h330" stroke="#2f9494" strokeDasharray="26 6" strokeDashoffset="-6" />
        <path d="M1009 223.5h347M1026 654.5h330" stroke="#7c7c7c" />
        <path d="M1321.5 164v59M1026 672.5h330" stroke="#3cc8c0" />
        <path d="M1032 636.5h324" stroke="#4fe0e0" strokeDasharray="26 6" />

        <VText x={1104} y={425}>KL38(1) 200x400</VText>
        <VText x={1154} y={425}>C8@100/200(2)</VText>
        <VText x={1203} y={425}>2C16;3C16</VText>
        <text x="1190" y="501" fill="#ffff00" fontSize="36">KL29(1) 200x400</text>
        <text x="1190" y="550" fill="#ffff00" fontSize="36">C8@100/200(2)</text>
        <text x="1190" y="599" fill="#ffff00" fontSize="36">2C18;2C16</text>

        <AxisMark x={506} y={177}>35-29</AxisMark>
        <AxisMark x={793} y={177}>35-30</AxisMark>
        <AxisMark x={362} y={661}>35-28</AxisMark>
        <AxisMark x={1008} y={661}>35-31</AxisMark>

        {/* UCS */}
        <path d="M382 624v-42" stroke="#f00" strokeWidth="4" />
        <path d="M377 588l5-11 5 11z" fill="#f00" />
        <path d="M382 625h-42" stroke="#0f0" strokeWidth="4" />
        <path d="M344 620l-11 5 11 5z" fill="#0f0" />
        <path d="M361 579l9 8M370 579l-9 8" stroke="#c81e1e" />
        <path d="M336 606l4 5 4-5M340 611v5" fill="none" stroke="#1ec81e" />
      </g>
    </svg>
  )
}

function PromptDialog() {
  return (
    <div
      role="dialog"
      aria-labelledby="prompt-title"
      className="absolute top-[134px] left-[214px] flex h-[182px] w-[270px] flex-col rounded-md border border-[#d4d8da] bg-linear-to-b from-[#6a6e72] via-[#6f8f7c] via-40% to-[#262b2c] px-[5px] pb-[5px]"
    >
      <div className="-mx-[5px] flex h-[27px] shrink-0 items-center rounded-t-md bg-linear-to-r from-[#8f9396] via-[#45494c] via-55% to-[#767b7e] pl-1.5">
        <h2 id="prompt-title" className="text-xs">
          提示
        </h2>
        <button
          type="button"
          aria-label="关闭"
          className="mr-1 ml-auto flex h-[18px] w-12 items-center justify-center self-start rounded-b-sm border border-t-0 border-[#f0c8c0] bg-linear-to-b from-[#dc8a7c] via-[#c03a28] to-[#d0563c]"
        >
          <svg viewBox="0 0 12 10" className="h-2.5 w-3">
            <path d="M2.5 1.5l7 7M9.5 1.5l-7 7" stroke="#5a2a24" strokeWidth="3.6" />
            <path d="M2.5 1.5l7 7M9.5 1.5l-7 7" stroke="#fff" strokeWidth="2.2" />
          </svg>
        </button>
      </div>
      <div className="flex flex-1 flex-col border border-[#26292b] bg-[#f0f0f0]">
        <div className="flex h-[93px] items-center gap-2 bg-white pl-[25px]">
          <svg viewBox="0 0 32 32" className="size-8 shrink-0">
            <defs>
              <linearGradient id="info" x1="0" y1="0" x2="1" y2="1">
                <stop offset="0" stopColor="#5f8fe8" />
                <stop offset="0.5" stopColor="#2450c4" />
                <stop offset="1" stopColor="#122c9c" />
              </linearGradient>
            </defs>
            <circle cx="16" cy="16" r="15" fill="url(#info)" stroke="#8c94a0" />
            <circle cx="16" cy="16" r="14" fill="none" stroke="#e6ebf6" strokeWidth="1.5" />
            <circle cx="16" cy="8.5" r="2.8" fill="#fff" />
            <path d="M13.5 13h5v13h-5z" fill="#f2f2f2" />
          </svg>
          <p className="text-xs leading-4">共有0道梁成功生成侧面钢筋!</p>
        </div>
        <div className="flex flex-1 items-center justify-end pr-[7px]">
          <button
            type="button"
            className="h-7 w-[86px] rounded-xs border border-[#3c6e96] bg-linear-to-b from-[#eef7fc] to-[#b2dcf5] p-px text-xs"
          >
            <span className="flex size-full items-center justify-center border border-dotted border-[#333]">确定</span>
          </button>
        </div>
      </div>
    </div>
  )
}

// ---------------------------------------------------------------- bottom bars

function Spinner({ label, value, className }: { label: string; value: string; className: string }) {
  return (
    <span className={clsx("flex h-[22px] shrink-0 items-center border border-[#7c7c7c] bg-[#f4f4f4]", className)}>
      <input type="text" aria-label={label} defaultValue={value} className="w-0 min-w-0 flex-1 pr-2 text-right text-xs text-[#8a8a8a] outline-none" />
      <svg viewBox="0 0 10 18" className="mr-0.5 h-[18px] w-2.5 shrink-0">
        <path d="M2 6l3-3.500L8 6zM2 12l3 3.500L8 12z" fill="#666" />
      </svg>
    </span>
  )
}

function SnapBar() {
  return (
    <Bar className="h-[31px] text-xs">
      <Handle />
      <Item icon="ortho" label="正交" />
      <Item icon="snap" label="对象捕捉" active />
      <Item icon="dynInput" label="动态输入" active />
      <span className="w-1.5" />
      <Handle />
      <Item icon="cross" label="交点" />
      <Item icon="perp" label="垂点" active />
      <Item icon="mid" label="中点" active />
      <Item icon="vertex" label="顶点" />
      <Item icon="coord" label="坐标" />
      <span className="w-1" />
      <Handle />
      <Picker label="偏移方式" value="不偏移" className="mr-0.5 ml-0.5 w-14" />
      <Sep />
      <span className="w-[18px] shrink-0 text-[#7a7a7a]">X=</span>
      <Spinner label="X" value="0" className="w-[58px]" />
      <span className="w-[25px] shrink-0 text-[#7a7a7a]">mm</span>
      <span className="w-[18px] shrink-0 text-[#7a7a7a]">Y=</span>
      <Spinner label="Y" value="0" className="w-[58px]" />
      <span className="w-[22px] shrink-0 text-[#7a7a7a]">mm</span>
      <Sep />
      <label className="mr-1 ml-0.5 flex shrink-0 items-center gap-2">
        <input type="checkbox" className="size-[11px] appearance-none border border-[#a0a0a0] bg-[#f4f4f4]" />
        旋转
      </label>
      <Spinner label="旋转角度" value="0.000" className="w-[68px]" />
      <span className="ml-0.5 text-[#555]">°</span>
    </Bar>
  )
}

function StatusBar() {
  const cell = "flex h-5 shrink-0 items-center overflow-hidden border border-[#d0d0d0] bg-[#fafafa] pl-0.5"
  return (
    <footer className="flex h-[22px] shrink-0 items-center gap-0.5 bg-[#ececec]">
      <div className={clsx(cell, "-ml-2.5 w-[148px]")}>
        <Song>X=16112 Y=30592</Song>
      </div>
      <div className={clsx(cell, "w-[78px]")}>
        <Song>层高:2.9m</Song>
      </div>
      <div className={clsx(cell, "w-[98px]")}>
        <Song>底标高:12.27m</Song>
      </div>
      <div className={clsx(cell, "w-12")}>
        <Song>0</Song>
      </div>
      <div className={clsx(cell, "min-w-0 flex-1")}>
        <Song>按鼠标左键点选或者拉框选择梁图元，按右键确认选择或ESC取消</Song>
      </div>
      <div className={clsx(cell, "w-[70px]")}>
        <Song>122.8 FPS</Song>
      </div>
    </footer>
  )
}

const TASKS: { name: string; framed: boolean; art: ReactNode }[] = [
  {
    name: "浏览器",
    framed: false,
    art: (
      <>
        <path d="M14 2C8 0 2 5 2 10s6 8 11 6c3-1 3-4 1-7s-2-5 0-7z" fill="#38a44a" />
        <path d="M18 2c6-2 12 2 12 7s-5 8-10 6c-4-1-6-4-5-7s2-4 3-6z" fill="#2f7be0" />
        <path d="M3 22c1-5 6-6 10-4 3 2 2 5 3 7s-2 6-6 6-8-4-7-9z" fill="#f2bc2a" />
        <path d="M18 18c4-3 11-1 12 4s-4 9-8 9-3-4-4-6-3-5 0-7z" fill="#e0452c" />
      </>
    ),
  },
  {
    name: "资源管理器",
    framed: true,
    art: (
      <>
        <path d="M2 29V5h8l2 3h16v21z" fill="#f0d27c" stroke="#b8933a" />
        <path d="M6 2h6v7H6zM14 3h6v6h-6z" fill="#fff" stroke="#5a9a5a" />
        <path d="M2 12h27v17H2z" fill="#f9e6a6" />
        <path d="M7 31V19h18v12h-4v-7H11v7z" fill="#8fc8ee" stroke="#4a8ac0" />
      </>
    ),
  },
  {
    name: "播放器",
    framed: false,
    art: (
      <>
        <path d="M5 5h19v23H5zM24 7h3v19h-3z" fill="#cfe6f4" stroke="#8ab4cc" />
        <circle cx="15" cy="16" r="9" fill="#f0802a" stroke="#fff" />
        <path d="M12 11l8 5-8 5z" fill="#fff" />
      </>
    ),
  },
  {
    name: "助手",
    framed: false,
    art: (
      <>
        <path d="M15 1c2 4 6 4 9 7 5 5 5 13 1 18-5 5-13 5-18 0C2 20 4 12 9 8c3-2 5-3 6-7z" fill="#f08a2c" stroke="#c05a14" />
        <ellipse cx="16" cy="19" rx="9.5" ry="8.5" fill="#fbdcae" />
        <circle cx="12" cy="17" r="2" fill="#222" />
        <circle cx="20" cy="17" r="2" fill="#222" />
        <path d="M12 22c2 3 6 3 8 0z" fill="#b03a1c" />
      </>
    ),
  },
  {
    name: "AutoCAD",
    framed: true,
    art: (
      <>
        <defs>
          <linearGradient id="acad" x1="0" y1="0" x2="0" y2="1">
            <stop offset="0" stopColor="#f4a8a4" />
            <stop offset="1" stopColor="#cc2422" />
          </linearGradient>
        </defs>
        <path d="M0 0h32v32H0z" fill="url(#acad)" />
        <path d="M15 4L5 24l7-2 3-7 3 7 9 2L17 4z" fill="#5c0b10" />
        <path d="M17 4l10 20-9-2-2-8z" fill="#8c1a1a" />
      </>
    ),
  },
  {
    name: "WPS",
    framed: true,
    art: (
      <>
        <rect width="32" height="32" rx="5" fill="#3ba0f8" />
        <path d="M7 11v11l9-7 9 7V11" fill="none" stroke="#fff" strokeWidth="2.6" />
      </>
    ),
  },
  {
    name: "应用中心",
    framed: true,
    art: (
      <>
        <rect x="1" y="2" width="14" height="13" rx="3" fill="#4caa3c" />
        <rect x="17" y="2" width="14" height="13" rx="3" fill="#7ac04a" />
        <rect x="1" y="17" width="14" height="13" rx="3" fill="#f08a3c" />
        <rect x="17" y="17" width="14" height="13" rx="3" fill="#d8502c" />
        <circle cx="8" cy="8.5" r="3" fill="none" stroke="#fff" strokeWidth="1.5" />
        <path d="M5 26l3-4 3 4M20 23h8" fill="none" stroke="#fff" strokeWidth="1.5" />
        <circle cx="25" cy="7" r="7" fill="#d8262c" />
        <text x="25" y="11" textAnchor="middle" fontSize="11" fontWeight="700" fill="#fff">1</text>
      </>
    ),
  },
  {
    name: "广联达",
    framed: true,
    art: (
      <>
        <rect width="32" height="32" rx="6" fill="#1f94e4" />
        <path d="M21 8c-3-3-6-1-6 3v10c0 6-8 5-8-1M8 14.5h17M15 20c1 6 10 5 10-1" fill="none" stroke="#fff" strokeWidth="2.8" />
      </>
    ),
  },
  {
    name: "360浏览器",
    framed: true,
    art: (
      <>
        <circle cx="16" cy="16" r="14" fill="#58b838" stroke="#dff5d4" strokeWidth="1.5" />
        <path d="M8 17h16c0-11-15-11-16 0 0 9 12 9 15 3" fill="none" stroke="#fff" strokeWidth="3.4" />
        <path d="M3 25C12 24 26 14 29 7" fill="none" stroke="#eaf9e0" strokeWidth="1.5" />
      </>
    ),
  },
]

function Taskbar() {
  return (
    <nav
      aria-label="任务栏"
      className="flex h-10 shrink-0 items-center overflow-hidden border-t border-[#0f2f52] bg-linear-to-r from-[#2b6f9e] via-[#4aa6d6] via-25% to-[#134378] to-80% text-white"
    >
      <button type="button" aria-label="开始" className="-ml-0.5 shrink-0">
        <svg viewBox="0 0 38 38" className="size-[38px]">
          <circle cx="19" cy="19" r="17" fill="#1f5f94" stroke="#9cd0ec" strokeWidth="1.5" />
          <path d="M10 12c3-2 5-2 8 0l-1 7c-3-2-5-2-8 0z" fill="#f0652c" />
          <path d="M20 12c3 2 5 2 8 0l-1 7c-3 2-5 2-8 0z" fill="#8cc63c" />
          <path d="M9 21c3-2 5-2 8 0l-1 7c-3-2-5-2-8 0z" fill="#3a9ce8" />
          <path d="M19 21c3 2 5 2 8 0l-1 7c-3 2-5 2-8 0z" fill="#f8cc3c" />
        </svg>
      </button>
      <div className="ml-2 flex shrink-0 gap-0.5">
        {TASKS.map(({ name, framed, art }) => (
          <button
            key={name}
            type="button"
            aria-label={name}
            className={clsx(
              "flex h-[38px] w-[60px] items-center justify-center rounded-sm border",
              framed ? "border-white/50 bg-white/25" : "border-transparent",
            )}
          >
            <svg viewBox="0 0 32 32" className="size-[30px]">
              {art}
            </svg>
          </button>
        ))}
      </div>
      <div className="ml-auto flex shrink-0 items-center gap-2">
        <span className="text-[11px]">CH</span>
        <svg viewBox="0 0 16 16" className="size-4">
          <path d="M1 6h14v8H1z" fill="#e4e4e4" stroke="#777" />
          <path d="M3 8.5h10M3 11h10M8 5l4-3" stroke="#666" strokeDasharray="1.5 1" />
        </svg>
        <svg viewBox="0 0 16 16" className="size-4">
          <circle cx="8" cy="8" r="7.2" fill="#1f35b4" stroke="#dfe6ff" />
          <text x="8" y="12" textAnchor="middle" fontSize="11" fontWeight="700" fill="#fff">?</text>
        </svg>
        <svg viewBox="0 0 10 18" className="h-[18px] w-2.5">
          <path d="M3 1.5h6v3H3zM1 4.5h6v3H1z" fill="none" stroke="#fff" />
          <path d="M2 13h6l-3 3z" fill="#fff" />
        </svg>
        <svg viewBox="0 0 12 16" className="ml-3 h-4 w-3">
          <path d="M3 1h6v3H3z" fill="#ddd" />
          <path d="M1 4h10v11H1z" fill="#3ca43c" />
          <path d="M6 13V6M3.5 8v2L6 11.5 8.5 10V8" fill="none" stroke="#fff" />
        </svg>
        <svg viewBox="0 0 8 5" className="mx-2 h-[5px] w-2">
          <path d="M0 5h8L4 0z" fill="#fff" />
        </svg>
        <svg viewBox="0 0 16 16" className="size-4">
          <ellipse cx="8" cy="8" rx="7" ry="5.5" fill="#9aa4ac" stroke="#dfe4e8" />
          <path d="M3 8c2-4 8-3 8 0s-5 3-6 1" fill="none" stroke="#34424e" strokeWidth="1.5" />
        </svg>
        <svg viewBox="0 0 16 16" className="size-4">
          <path d="M2.5 2.5h5v12h-5zM4 1h2" fill="none" stroke="#fff" strokeWidth="1.6" />
          <path d="M9 6h5v4l-2 2H9zM10 3v3M13 3v3M9 12v3" fill="#fff" stroke="#fff" />
        </svg>
        <svg viewBox="0 0 16 16" className="size-4">
          <path d="M5.5 4.5h10v8h-10zM8 15h5M1 1v5h3V1M2.5 6v8H5" fill="none" stroke="#fff" strokeWidth="1.3" />
        </svg>
        <svg viewBox="0 0 16 16" className="size-4">
          <path d="M3 6h3l4-4v12l-4-4H3z" fill="#fff" />
          <path d="M12 5c1.5 2 1.5 4 0 6" fill="none" stroke="#fff" />
        </svg>
        <time className="w-[62px] text-center text-xs leading-[18px]">
          23:37
          <br />
          2017/3/6
        </time>
        <button type="button" aria-label="显示桌面" className="h-10 w-3.5 border border-[#5a86b4] bg-white/10" />
      </div>
    </nav>
  )
}

export default function App() {
  return (
    <div className={clsx(UI, "flex min-h-screen flex-col overflow-hidden bg-[#f0f0f0] text-black")}>
      <TitleBar />
      <MenuBar />
      <MainToolbar />
      <div className="flex flex-1 pt-px">
        <NavPanel />
        <SidePanel />
        <main className="ml-[3px] flex min-w-0 flex-1 flex-col">
          <EditToolbars />
          <div className="relative min-h-96 flex-1 overflow-hidden">
            <Drawing />
            <PromptDialog />
            <div className="absolute top-[320px] -right-[27px] flex size-[46px] items-center rounded-full border-2 border-[#ffd9b0] bg-[#f5821f] pl-0.5 text-[11px] font-bold text-white">
              78
            </div>
          </div>
          <SnapBar />
        </main>
      </div>
      <StatusBar />
      <Taskbar />
    </div>
  )
}
